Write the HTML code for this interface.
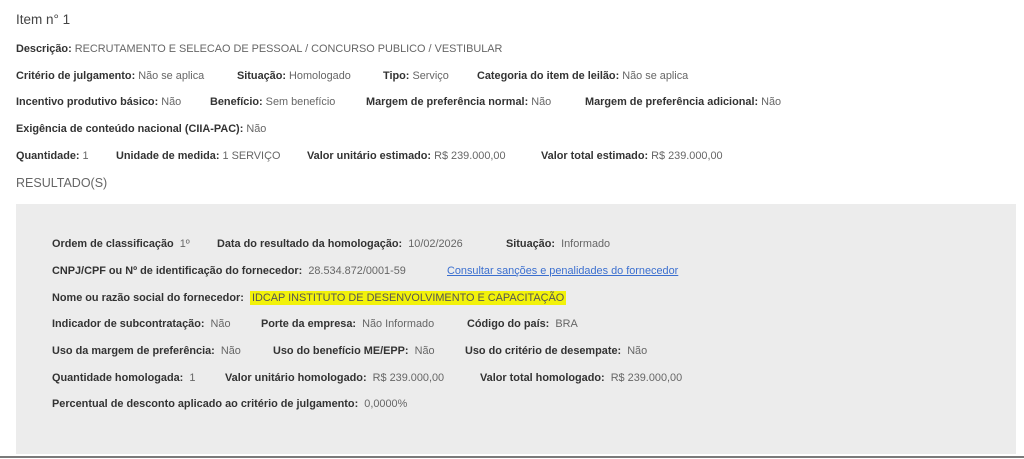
<!DOCTYPE html>
<html><head><meta charset="utf-8"><style>
html,body{margin:0;padding:0;background:#fff;width:1024px;height:459px;overflow:hidden;position:relative;font-family:"Liberation Sans",sans-serif;}
.s{position:absolute;font-size:10.9px;line-height:14px;color:#666;white-space:nowrap;}
.s b{color:#333;font-weight:bold;}
.t{position:absolute;left:16px;top:12px;font-size:13.5px;color:#444;}
.r{position:absolute;left:16px;top:176px;font-size:12.5px;color:#666;}
.box{position:absolute;left:16px;top:204px;width:1000px;height:250px;background:#ececec;}
.line{position:absolute;left:0;top:456px;width:1024px;height:2px;background:#7a7a7a;}
a{color:#3b6fcf;text-decoration:underline;}
.hl{background:#f2f20a;color:#555;padding:1px 2px;}
</style></head><body>
<div class="t">Item n° 1</div>
<div class="s" style="left:16px;top:42px"><b>Descrição:</b> RECRUTAMENTO E SELECAO DE PESSOAL / CONCURSO PUBLICO / VESTIBULAR</div>

<div class="s" style="left:16px;top:69px"><b>Critério de julgamento:</b> Não se aplica</div>
<div class="s" style="left:237px;top:69px"><b>Situação:</b> Homologado</div>
<div class="s" style="left:383px;top:69px"><b>Tipo:</b> Serviço</div>
<div class="s" style="left:477px;top:69px"><b>Categoria do item de leilão:</b> Não se aplica</div>

<div class="s" style="left:16px;top:95px"><b>Incentivo produtivo básico:</b> Não</div>
<div class="s" style="left:210px;top:95px"><b>Benefício:</b> Sem benefício</div>
<div class="s" style="left:366px;top:95px"><b>Margem de preferência normal:</b> Não</div>
<div class="s" style="left:585px;top:95px"><b>Margem de preferência adicional:</b> Não</div>

<div class="s" style="left:16px;top:122px"><b>Exigência de conteúdo nacional (CIIA-PAC):</b> Não</div>

<div class="s" style="left:16px;top:149px"><b>Quantidade:</b> 1</div>
<div class="s" style="left:116px;top:149px"><b>Unidade de medida:</b> 1 SERVIÇO</div>
<div class="s" style="left:307px;top:149px"><b>Valor unitário estimado:</b> R$ 239.000,00</div>
<div class="s" style="left:541px;top:149px"><b>Valor total estimado:</b> R$ 239.000,00</div>

<div class="r">RESULTADO(S)</div>
<div class="box"></div>

<div class="s" style="left:52px;top:237px"><b>Ordem de classificação</b>&nbsp; 1º</div>
<div class="s" style="left:217px;top:237px"><b>Data do resultado da homologação:</b>&nbsp; 10/02/2026</div>
<div class="s" style="left:506px;top:237px"><b>Situação:</b>&nbsp; Informado</div>

<div class="s" style="left:52px;top:264px"><b>CNPJ/CPF ou Nº de identificação do fornecedor:</b>&nbsp; 28.534.872/0001-59</div>
<div class="s" style="left:447px;top:264px"><a>Consultar sanções e penalidades do fornecedor</a></div>

<div class="s" style="left:52px;top:291px"><b>Nome ou razão social do fornecedor:</b></div>
<div class="s" style="left:250px;top:291px"><span class="hl">IDCAP INSTITUTO DE DESENVOLVIMENTO E CAPACITAÇÃO</span></div>

<div class="s" style="left:52px;top:317px"><b>Indicador de subcontratação:</b>&nbsp; Não</div>
<div class="s" style="left:261px;top:317px"><b>Porte da empresa:</b>&nbsp; Não Informado</div>
<div class="s" style="left:467px;top:317px"><b>Código do país:</b>&nbsp; BRA</div>

<div class="s" style="left:52px;top:344px"><b>Uso da margem de preferência:</b>&nbsp; Não</div>
<div class="s" style="left:273px;top:344px"><b>Uso do benefício ME/EPP:</b>&nbsp; Não</div>
<div class="s" style="left:465px;top:344px"><b>Uso do critério de desempate:</b>&nbsp; Não</div>

<div class="s" style="left:52px;top:371px"><b>Quantidade homologada:</b>&nbsp; 1</div>
<div class="s" style="left:225px;top:371px"><b>Valor unitário homologado:</b>&nbsp; R$ 239.000,00</div>
<div class="s" style="left:480px;top:371px"><b>Valor total homologado:</b>&nbsp; R$ 239.000,00</div>

<div class="s" style="left:52px;top:397px"><b>Percentual de desconto aplicado ao critério de julgamento:</b>&nbsp; 0,0000%</div>

<div class="line"></div>
</body></html>
